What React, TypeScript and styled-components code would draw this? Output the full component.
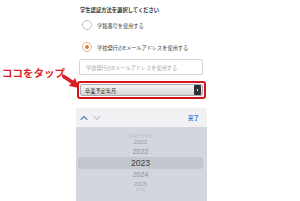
import React from "react";
import styled, { createGlobalStyle } from "styled-components";

const GlobalStyle = createGlobalStyle`
  html, body {
    margin: 0;
    padding: 0;
    background: #ffffff;
  }
  body {
    font-family: "Noto Sans CJK JP", "Noto Sans", sans-serif;
    width: 300px;
    height: 201px;
    overflow: hidden;
  }
`;

const Page = styled.div`
  position: relative;
  width: 300px;
  height: 201px;
  overflow: hidden;
`;

const Form = styled.div`
  margin-left: 76px;
  width: 131px;
  display: flex;
  flex-direction: column;
`;

const Title = styled.div`
  margin: 6px 0 0 4px;
  height: 8px;
  line-height: 8px;
  font-size: 5.3px;
  font-weight: 700;
  color: #333;
  white-space: nowrap;
`;

const RadioRow = styled.div`
  display: flex;
  align-items: center;
  gap: 5px;
  height: 22px;
  padding-left: 6px;
  font-size: 5.2px;
  color: #444;
  white-space: nowrap;
`;

const Radio = styled.span<{ $checked?: boolean }>`
  box-sizing: border-box;
  width: 10px;
  height: 10px;
  border-radius: 50%;
  border: 1px solid ${(p) => (p.$checked ? "#e9b48c" : "#c4c4c4")};
  background: #fff;
  display: flex;
  align-items: center;
  justify-content: center;
  &::after {
    content: "";
    width: 4px;
    height: 4px;
    border-radius: 50%;
    background: ${(p) => (p.$checked ? "#e07a30" : "transparent")};
  }
`;

const Input = styled.div`
  box-sizing: border-box;
  margin: 1px 0 0 3px;
  width: 124px;
  height: 16px;
  border: 1px solid #d6d6d6;
  border-radius: 2px;
  display: flex;
  align-items: center;
  padding-left: 6px;
  font-size: 5.2px;
  color: #a8a8a8;
  white-space: nowrap;
`;

const Highlight = styled.div`
  box-sizing: border-box;
  margin: 6px 0 0 1px;
  width: 129px;
  height: 18px;
  border: 2px solid #d7141e;
  border-radius: 3px;
  padding: 1px;
`;

const Select = styled.div`
  box-sizing: border-box;
  height: 100%;
  border: 1px solid #a9a9a9;
  border-radius: 2px;
  background: linear-gradient(#f7f7f7, #d4d4d4);
  display: flex;
  align-items: center;
  justify-content: space-between;
  padding: 0 1px 0 4px;
  font-size: 5.2px;
  color: #333;
`;

const SelectButton = styled.span`
  width: 7px;
  height: 10px;
  background: #2f3033;
  border-radius: 1px;
  display: flex;
  align-items: center;
  justify-content: center;
  &::after {
    content: "";
    width: 1.5px;
    height: 1.5px;
    background: #e8e8e8;
  }
`;

const Note = styled.div`
  position: absolute;
  left: 2px;
  top: 66px;
  font-size: 10.5px;
  line-height: 14px;
  font-weight: 700;
  color: #dc1f26;
  white-space: nowrap;
`;

const Arrow = styled.svg`
  position: absolute;
  left: 62px;
  top: 73px;
`;

const Picker = styled.div`
  margin: 9px 0 0 0;
  width: 131px;
  display: flex;
  flex-direction: column;
`;

const Toolbar = styled.div`
  height: 19px;
  background: #f1f1f3;
  display: flex;
  align-items: center;
  padding: 0 8px 0 4px;
  gap: 5px;
`;

const Done = styled.span`
  margin-left: auto;
  font-size: 5.5px;
  font-weight: 700;
  color: #2f7de1;
`;

const Wheel = styled.div`
  height: 80px;
  background: #d3d6dc;
  display: flex;
  flex-direction: column;
  padding-top: 7px;
`;

const Item = styled.div<{ $h: number; $size: number; $color: string; $selected?: boolean }>`
  height: ${(p) => p.$h}px;
  line-height: ${(p) => p.$h}px;
  font-family: "Liberation Sans", "Noto Sans CJK JP", sans-serif;
  font-size: ${(p) => p.$size}px;
  color: ${(p) => p.$color};
  text-align: center;
  margin: 0 4px 0 2px;
  background: ${(p) => (p.$selected ? "#c4c7cd" : "transparent")};
  border-radius: 2px;
  white-space: nowrap;
  overflow: hidden;
`;

const Chevron = ({ up, color }: { up?: boolean; color: string }) => (
  <svg width="8" height="6" viewBox="0 0 8 6">
    <path
      d={up ? "M1 4.5 L4 1.5 L7 4.5" : "M1 1.5 L4 4.5 L7 1.5"}
      fill="none"
      stroke={color}
      strokeWidth="1.1"
      strokeLinecap="round"
      strokeLinejoin="round"
    />
  </svg>
);

const items = [
  { label: "卒業予定年月", h: 5, size: 4, color: "#b9bcc2" },
  { label: "2021", h: 7, size: 6, color: "#9a9da3" },
  { label: "2022", h: 11, size: 7, color: "#8c8f95" },
  { label: "2023", h: 12, size: 8.5, color: "#3a3b3e", selected: true },
  { label: "2024", h: 11, size: 7, color: "#8c8f95" },
  { label: "2025", h: 8, size: 6, color: "#a0a3a9" },
  { label: "2026", h: 4, size: 4, color: "#b5b8be" },
];

export default function App() {
  return (
    <Page>
      <GlobalStyle />
      <Form>
        <Title>学生認証方法を選択してください</Title>
        <RadioRow>
          <Radio />
          学籍番号を使用する
        </RadioRow>
        <RadioRow>
          <Radio $checked />
          学校発行のEメールアドレスを使用する
        </RadioRow>
        <Input>学校発行のEメールアドレスを使用する</Input>
        <Highlight>
          <Select>
            卒業予定年月
            <SelectButton />
          </Select>
        </Highlight>
        <Picker>
          <Toolbar>
            <Chevron up color="#5a7fb0" />
            <Chevron color="#c3c6cc" />
            <Done>完了</Done>
          </Toolbar>
          <Wheel>
            {items.map((it) => (
              <Item
                key={it.label}
                $h={it.h}
                $size={it.size}
                $color={it.color}
                $selected={it.selected}
              >
                {it.label}
              </Item>
            ))}
          </Wheel>
        </Picker>
      </Form>
      <Note>ココをタップ</Note>
      <Arrow width="20" height="18" viewBox="0 0 20 18">
        <path d="M1 3 L10 9" stroke="#dc1f26" strokeWidth="3.5" strokeLinecap="round" />
        <path d="M7 13 L17 15 L13 5 Z" fill="#dc1f26" />
      </Arrow>
    </Page>
  );
}
